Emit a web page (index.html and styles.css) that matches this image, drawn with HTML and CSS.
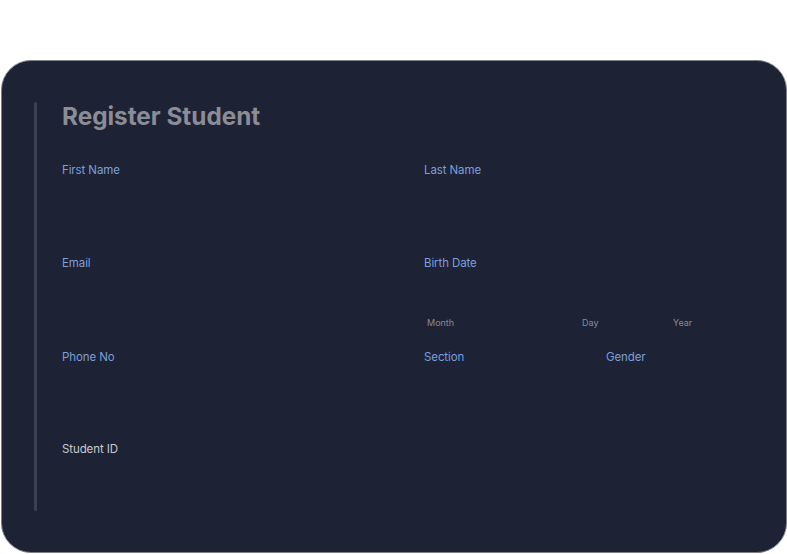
FILE: index.html
```html
<!DOCTYPE html>
<html>
<head>
<meta charset="utf-8">
<link rel="stylesheet" href="styles.css">
</head>
<body>
<div class="page">
  <div class="card">
    <div class="bar"></div>
    <form class="form">
      <h1 class="title">Register Student</h1>
      <div class="grid">
        <div class="field"><label class="label">First Name</label></div>
        <div class="field"><label class="label">Last Name</label></div>
        <div class="field"><label class="label">Email</label></div>
        <div class="field">
          <label class="label">Birth Date</label>
          <div class="date">
            <span class="sub sub-month">Month</span>
            <span class="sub sub-day">Day</span>
            <span class="sub sub-year">Year</span>
          </div>
        </div>
        <div class="field"><label class="label">Phone No</label></div>
        <div class="field split">
          <div><label class="label">Section</label></div>
          <div><label class="label">Gender</label></div>
        </div>
        <div class="field"><label class="label label-light">Student ID</label></div>
      </div>
    </form>
  </div>
</div>
</body>
</html>
```

FILE: styles.css
```css
html, body {
  margin: 0;
  padding: 0;
  background: #ffffff;
}
.page {
  padding: 60px 0 1px 1px;
  height: 554px;
  box-sizing: border-box;
}
.card {
  height: 493px;
  box-sizing: border-box;
  background: #1e2235;
  border: 1px solid #7e808a;
  border-radius: 30px;
  display: flex;
  padding: 41px 0 0 32px;
}
.bar {
  width: 3px;
  height: 409px;
  background: #3b4052;
  border-radius: 2px;
  flex: none;
}
.form {
  margin-left: 25px;
  flex: 1;
}
.title {
  margin: 0;
  font-family: Inter, "Liberation Sans", sans-serif;
  font-weight: 700;
  font-size: 24.3px;
  line-height: 29px;
  color: #8b8d96;
}
.grid {
  margin-top: 31px;
  display: grid;
  grid-template-columns: 362px 1fr;
  grid-template-rows: 93px 94px 92px 93px;
}
.label {
  display: block;
  font-family: Inter, "Liberation Sans", sans-serif;
  font-size: 11.5px;
  line-height: 16px;
  letter-spacing: -0.1px;
  color: #7b9fd8;
}
.label-light {
  color: #c9cad0;
}
.date {
  display: flex;
  margin-top: 46px;
  padding-left: 3px;
}
.sub {
  font-family: Inter, "Liberation Sans", sans-serif;
  font-size: 9px;
  line-height: 12px;
  color: #8a8b91;
}
.sub-month { width: 155px; }
.sub-day { width: 91px; }
.split {
  display: grid;
  grid-template-columns: 182px 1fr;
}
```
